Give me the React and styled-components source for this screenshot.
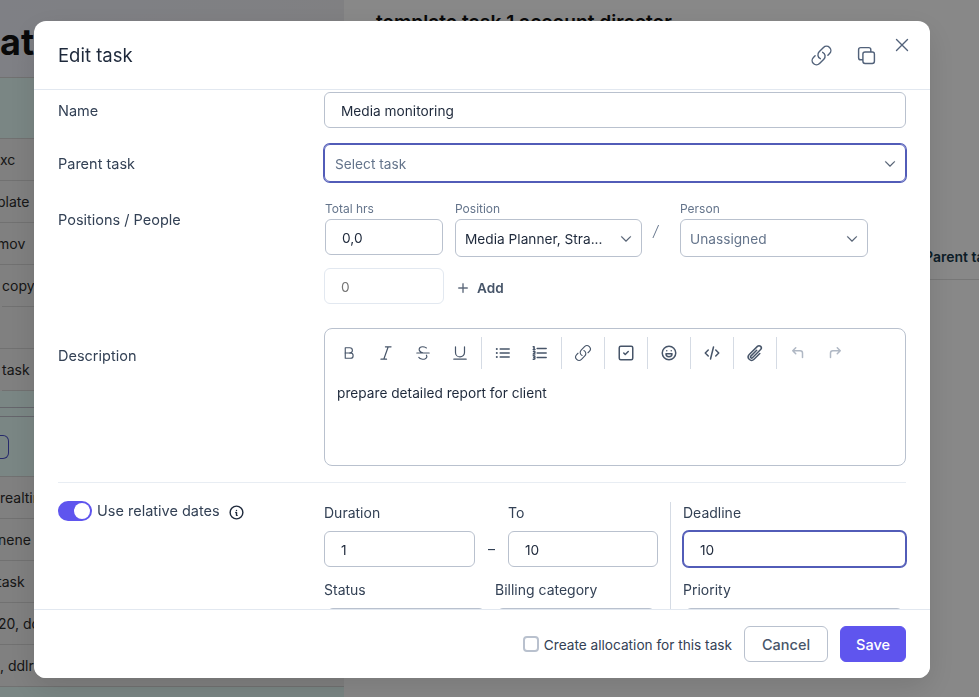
import React from "react"
import styled, { createGlobalStyle } from "styled-components"
import {
    HiOutlineItalic, HiOutlineStrikethrough, HiOutlineUnderline,
    HiOutlineListBullet, HiOutlineNumberedList, HiOutlineLink, HiOutlinePaperClip,
    HiOutlineSquare2Stack, HiOutlineXMark, HiChevronDown, HiPlus,
} from "react-icons/hi2"
import { TbBold, TbSquareCheck, TbMoodHappy, TbCode, TbInfoCircle, TbCornerUpLeft, TbCornerUpRight } from "react-icons/tb"

const GlobalStyle = createGlobalStyle`
body {
    margin: 0;
    font-family: Inter, "Liberation Sans", sans-serif;
    font-size: 14px;
    background: #fff;
}
`

const Page = styled.div`
display: flex;
height: 100vh;
overflow: hidden;
`

const ListPanel = styled.div`
width: 344px;
flex-shrink: 0;
background: #f0f0f0;
overflow: hidden;
`

const ListHeader = styled.div`
height: 61px;
padding-top: 16px;
background: linear-gradient(90deg, #eef0f9, #f0f0f4);
border-bottom: 1px solid #d4d4d4;
font-size: 36px;
font-weight: 700;
color: #111;
line-height: 52px;
`

const GroupRow = styled.div`
height: ${p => p.$h}px;
background: #e5fbf8;
border-bottom: 1px solid ${p => p.$line || "#d4d4d4"};
display: flex;
align-items: center;
box-sizing: border-box;
`

const ListRow = styled.div`
height: 42px;
box-sizing: border-box;
border-bottom: 1px solid #d4d4d4;
display: flex;
align-items: center;
margin-left: ${p => p.$indent || 0}px;
color: #2b2b2b;
white-space: nowrap;
`

const OutlineChip = styled.div`
width: 9px;
height: 24px;
box-sizing: border-box;
border: 1px solid #4a50c8;
border-left: 0;
border-radius: 0 6px 6px 0;
`

const DetailPanel = styled.div`
flex: 1;
min-width: 0;
padding: 10px 32px 0;
`

const DetailTitle = styled.div`
font-size: 19.2px;
font-weight: 600;
line-height: 24px;
color: #111;
white-space: nowrap;
`

const DetailTabs = styled.div`
margin: 0 -32px;
padding: 214px 0 14px 580px;
border-bottom: 1px solid #e0e0e0;
font-weight: 600;
color: #17384a;
white-space: nowrap;
overflow: hidden;
`

const Backdrop = styled.div`
position: fixed;
inset: 0;
background: rgba(0, 0, 0, 0.467);
`

const Modal = styled.div`
position: fixed;
top: 21px;
left: 34px;
width: 896px;
height: 657px;
background: #fff;
border-radius: 12px;
box-shadow: 0 10px 30px rgba(0, 0, 0, 0.12);
display: flex;
flex-direction: column;
overflow: hidden;
color: #334155;
`

const ModalHeader = styled.header`
height: 69px;
flex-shrink: 0;
box-sizing: border-box;
padding: 0 24px;
border-bottom: 1px solid #e2e8f0;
display: flex;
align-items: center;
`

const ModalTitle = styled.h2`
flex: 1;
margin: 0;
font-size: 18.5px;
font-weight: 400;
color: #1e293b;
`

const HeaderIcons = styled.div`
display: flex;
align-items: center;
gap: 22px;
margin-right: 28px;
color: #52627a;
font-size: 23px;
line-height: 0;
`

const CloseButton = styled.div`
position: absolute;
top: 13px;
right: 17px;
font-size: 22px;
line-height: 0;
color: #52627a;
`

const ModalBody = styled.div`
flex: 1;
min-height: 0;
overflow: hidden;
padding: 2px 24px 0;
`

const FormRow = styled.div`
display: grid;
grid-template-columns: 266px 1fr;
margin-bottom: ${p => p.$mb || 0}px;
`

const FieldLabel = styled.div`
font-size: 14.5px;
line-height: 20px;
padding-top: ${p => p.$pt || 0}px;
align-self: ${p => (p.$center ? "center" : "start")};
`

const Input = styled.input`
display: block;
width: ${p => p.$w || "100%"};
height: 36px;
box-sizing: border-box;
padding: 1px 16px 0;
border: 1px solid ${p => (p.$focus ? "#525cb8" : "#b9c1ce")};
box-shadow: ${p => (p.$focus ? "0 0 0 1px #525cb8" : "none")};
border-radius: 6px;
outline: 0;
font: inherit;
font-size: 13.7px;
color: #1e293b;
&:disabled {
    background: #fff;
    border-color: #e2e8f0;
    color: #a8b2c0;
}
`

const Select = styled.div`
width: ${p => p.$w || "100%"};
margin-left: ${p => p.$ml || 0}px;
height: ${p => p.$h || 38}px;
box-sizing: border-box;
padding: 1px 8px 0 ${p => p.$pl || 10}px;
border: 1px solid ${p => (p.$focus ? "#525cb8" : "#b9c1ce")};
box-shadow: ${p => (p.$focus ? "0 0 0 1px #525cb8" : "none")};
border-radius: 6px;
display: flex;
align-items: center;
justify-content: space-between;
font-size: 13.7px;
color: ${p => (p.$placeholder ? "#64748b" : "#1e293b")};
flex-shrink: 0;
svg {
    font-size: 14px;
    color: #475569;
    stroke-width: 0.6;
}
`

const AssigneeRow = styled.div`
display: flex;
align-items: flex-start;
margin-left: 1px;
`

const SmallField = styled.div`
width: ${p => p.$w}px;
margin-right: ${p => p.$mr || 0}px;
flex-shrink: 0;
`

const SmallLabel = styled.div`
font-size: 12px;
line-height: 16px;
padding-top: 1px;
margin-bottom: 2px;
color: #64748b;
`

const Slash = styled.div`
width: 38px;
box-sizing: border-box;
padding: 21px 0 0 11px;
line-height: 20px;
font-size: 15px;
font-weight: 300;
color: #64748b;
font-style: italic;
`

const AddRow = styled.div`
display: flex;
align-items: center;
margin-top: 11px;
`

const AddButton = styled.div`
display: flex;
align-items: center;
gap: 7px;
margin-left: 12px;
padding-top: 3px;
font-weight: 600;
font-size: 13.6px;
color: #475569;
svg {
    font-size: 14px;
    stroke-width: 0.5;
}
`

const Editor = styled.div`
height: 138px;
box-sizing: border-box;
border: 1px solid #b9c1ce;
border-radius: 8px;
padding: 8px 3px 0;
`

const Toolbar = styled.div`
display: flex;
height: 32px;
`

const ToolGroup = styled.div`
display: flex;
align-items: center;
gap: 19px;
padding: 0 12px;
border-right: ${p => (p.$last ? "0" : "1px solid #d5dbe4")};
color: ${p => (p.$muted ? "#b0b8c4" : "#475569")};
font-size: 18px;
`

const EditorText = styled.div`
margin: 14px 0 0 9px;
line-height: 20px;
font-size: 13.7px;
color: #1e293b;
`

const Divider = styled.hr`
margin: 16px 0 0;
border: 0;
border-top: 1px solid #e8edf3;
`

const DatesRow = styled.div`
display: grid;
grid-template-columns: 266px 346px 1fr;
`

const ToggleCell = styled.div`
display: flex;
align-items: center;
align-self: start;
padding-top: 17px;
line-height: 20px;
`

const Toggle = styled.div`
width: 34px;
height: 20px;
box-sizing: border-box;
padding: 2px;
border-radius: 10px;
background: #5f55ee;
display: flex;
justify-content: flex-end;
margin-right: 5px;
&::after {
    content: "";
    width: 16px;
    height: 16px;
    border-radius: 50%;
    background: #fff;
}
`

const ToggleText = styled.span`
font-size: 14.5px;
padding-top: 1px;
`

const InfoIcon = styled(TbInfoCircle)`
font-size: 17px;
margin-left: 8px;
color: #1e293b;
position: relative;
top: 2px;
`

const DatesLeft = styled.div`
padding-top: 20px;
`

const DatesRight = styled.div`
margin-top: 19px;
padding: 1px 0 0 12px;
border-left: 1px solid #d5dbe4;
`

const DateGrid = styled.div`
display: flex;
align-items: flex-end;
`

const DateField = styled.div`
width: ${p => p.$w || 150}px;
flex-shrink: 0;
`

const DateLabel = styled.div`
line-height: 20px;
margin-bottom: 8px;
`

const Dash = styled.div`
width: 33px;
height: 36px;
line-height: 36px;
text-align: center;
flex-shrink: 0;
`

const MetaRow = styled.div`
display: flex;
margin-top: 13px;
`

const MetaField = styled.div`
width: ${p => p.$w}px;
flex-shrink: 0;
`

const ModalFooter = styled.footer`
height: 69px;
flex-shrink: 0;
box-sizing: border-box;
border-top: 1px solid #e2e8f0;
padding: 0 24px;
background: #fff;
display: flex;
align-items: center;
justify-content: flex-end;
gap: 12px;
`

const CheckLabel = styled.label`
display: flex;
align-items: center;
gap: 5px;
font-size: 13.65px;
line-height: 20px;
`

const CheckText = styled.span`
padding-top: 1px;
`

const CheckBox = styled.span`
width: 16px;
height: 16px;
box-sizing: border-box;
border: 2px solid #b9c1ce;
border-radius: 4px;
`

const Button = styled.button`
height: 36px;
width: ${p => (p.$primary ? 66 : 84)}px;
padding: 0;
border-radius: 6px;
border: 1px solid ${p => (p.$primary ? "#5f55ee" : "#b9c1ce")};
background: ${p => (p.$primary ? "#5f55ee" : "#fff")};
color: ${p => (p.$primary ? "#fff" : "#475569")};
font: inherit;
font-size: 14.5px;
font-weight: 500;
`

const App = () => {
    return (
        <>
            <GlobalStyle />
            <Page>
                <ListPanel>
                    <ListHeader>ate</ListHeader>
                    <GroupRow $h={61} />
                    <ListRow>xc</ListRow>
                    <ListRow $indent={-3}>plate</ListRow>
                    <ListRow $indent={-3}>mov</ListRow>
                    <ListRow $indent={2}>copy</ListRow>
                    <ListRow />
                    <ListRow $indent={2}>task</ListRow>
                    <GroupRow $h={17} $line="#bdbdc9" />
                    <GroupRow $h={9} $line="#bdbdc9" />
                    <GroupRow $h={60}><OutlineChip /></GroupRow>
                    <ListRow>realtime</ListRow>
                    <ListRow $indent={-2}>nene</ListRow>
                    <ListRow $indent={-3}>task</ListRow>
                    <ListRow $indent={-2}>20, ddl</ListRow>
                    <ListRow>, ddlr</ListRow>
                    <GroupRow $h={12} />
                </ListPanel>
                <DetailPanel>
                    <DetailTitle>template task 1 account director</DetailTitle>
                    <DetailTabs>Parent task</DetailTabs>
                </DetailPanel>
            </Page>
            <Backdrop />
            <Modal>
                <ModalHeader>
                    <ModalTitle>Edit task</ModalTitle>
                    <HeaderIcons>
                        <HiOutlineLink />
                        <HiOutlineSquare2Stack />
                    </HeaderIcons>
                    <CloseButton><HiOutlineXMark /></CloseButton>
                </ModalHeader>
                <ModalBody>
                    <FormRow $mb={16}>
                        <FieldLabel $center $pt={2}>Name</FieldLabel>
                        <Input defaultValue="Media monitoring" />
                    </FormRow>
                    <FormRow $mb={18}>
                        <FieldLabel $center $pt={1}>Parent task</FieldLabel>
                        <Select $focus $placeholder>Select task<HiChevronDown /></Select>
                    </FormRow>
                    <FormRow $mb={24}>
                        <FieldLabel $pt={10}>Positions / People</FieldLabel>
                        <div>
                            <AssigneeRow>
                                <SmallField $w={118} $mr={12}>
                                    <SmallLabel>Total hrs</SmallLabel>
                                    <Input defaultValue="0,0" />
                                </SmallField>
                                <SmallField $w={187}>
                                    <SmallLabel>Position</SmallLabel>
                                    <Select $pl={9}>Media Planner, Stra...<HiChevronDown /></Select>
                                </SmallField>
                                <Slash>/</Slash>
                                <SmallField $w={188}>
                                    <SmallLabel>Person</SmallLabel>
                                    <Select $pl={9} $placeholder>Unassigned<HiChevronDown /></Select>
                                </SmallField>
                            </AssigneeRow>
                            <AddRow>
                                <Input $w="120px" placeholder="0" disabled />
                                <AddButton><HiPlus />Add</AddButton>
                            </AddRow>
                        </div>
                    </FormRow>
                    <FormRow>
                        <FieldLabel $pt={18}>Description</FieldLabel>
                        <Editor>
                            <Toolbar>
                                <ToolGroup>
                                    <TbBold strokeWidth={1.5} />
                                    <HiOutlineItalic strokeWidth={1.6} />
                                    <HiOutlineStrikethrough strokeWidth={1.6} />
                                    <HiOutlineUnderline strokeWidth={1.6} />
                                </ToolGroup>
                                <ToolGroup>
                                    <HiOutlineListBullet strokeWidth={2} />
                                    <HiOutlineNumberedList strokeWidth={2} />
                                </ToolGroup>
                                <ToolGroup><HiOutlineLink /></ToolGroup>
                                <ToolGroup><TbSquareCheck /></ToolGroup>
                                <ToolGroup><TbMoodHappy /></ToolGroup>
                                <ToolGroup><TbCode /></ToolGroup>
                                <ToolGroup><HiOutlinePaperClip strokeWidth={2} /></ToolGroup>
                                <ToolGroup $last $muted>
                                    <TbCornerUpLeft />
                                    <TbCornerUpRight />
                                </ToolGroup>
                            </Toolbar>
                            <EditorText>prepare detailed report for client</EditorText>
                        </Editor>
                    </FormRow>
                    <Divider />
                    <DatesRow>
                        <ToggleCell>
                            <Toggle />
                            <ToggleText>Use relative dates</ToggleText>
                            <InfoIcon />
                        </ToggleCell>
                        <DatesLeft>
                            <DateGrid>
                                <DateField $w={151}>
                                    <DateLabel>Duration</DateLabel>
                                    <Input defaultValue="1" />
                                </DateField>
                                <Dash>–</Dash>
                                <DateField>
                                    <DateLabel>To</DateLabel>
                                    <Input defaultValue="10" />
                                </DateField>
                            </DateGrid>
                            <MetaRow>
                                <MetaField $w={171}>
                                    <DateLabel>Status</DateLabel>
                                    <Select $w="158px" $ml={3} />
                                </MetaField>
                                <MetaField $w={160}>
                                    <DateLabel>Billing category</DateLabel>
                                    <Select $w="158px" $ml={2} />
                                </MetaField>
                            </MetaRow>
                        </DatesLeft>
                        <DatesRight>
                            <DateField $w={223}>
                                <DateLabel>Deadline</DateLabel>
                                <Input $focus defaultValue="10" />
                            </DateField>
                            <MetaRow>
                                <MetaField $w={223}>
                                    <DateLabel>Priority</DateLabel>
                                    <Select $w="218px" $ml={2} />
                                </MetaField>
                            </MetaRow>
                        </DatesRight>
                    </DatesRow>
                </ModalBody>
                <ModalFooter>
                    <CheckLabel><CheckBox /><CheckText>Create allocation for this task</CheckText></CheckLabel>
                    <Button>Cancel</Button>
                    <Button $primary>Save</Button>
                </ModalFooter>
            </Modal>
        </>
    )
}

export default App
